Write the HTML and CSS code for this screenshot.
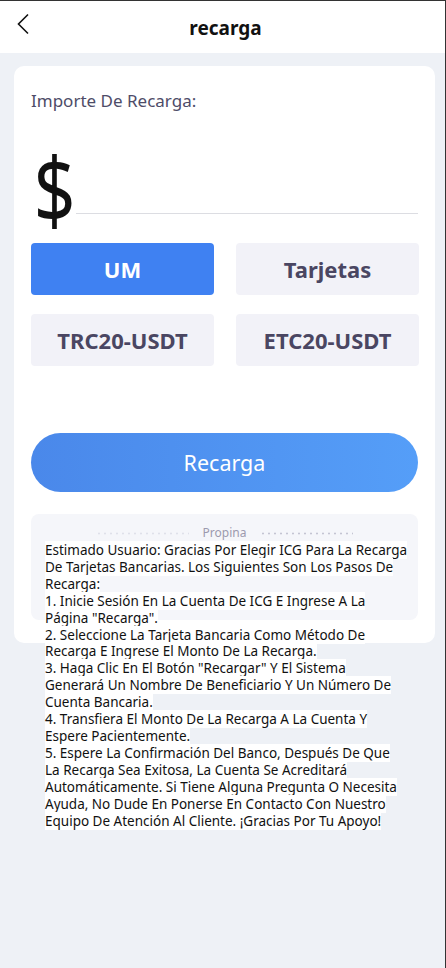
FILE: index.html
```html
<!DOCTYPE html>
<html lang="es">
<head>
<meta charset="utf-8">
<title>recarga</title>
<link rel="stylesheet" href="styles.css">
</head>
<body>
<div class="frame">
  <header class="topbar">
    <svg class="back" width="14" height="22" viewBox="0 0 14 22"><path d="M12 1.5 L2.5 11 L12 20.5" fill="none" stroke="#111" stroke-width="1.6"/></svg>
    <h1 class="title">recarga</h1>
  </header>
  <main class="card">
    <div class="label">Importe De Recarga:</div>
    <div class="amount">
      <span class="dollar">$</span>
      <div class="input"></div>
    </div>
    <div class="methods">
      <div class="method active">UM</div>
      <div class="method">Tarjetas</div>
      <div class="method">TRC20-USDT</div>
      <div class="method">ETC20-USDT</div>
    </div>
    <button class="submit">Recarga</button>
    <section class="tips">
      <div class="tips-head"><span class="dots left"></span><span class="tips-title">Propina</span><span class="dots right"></span></div>
      <div class="tips-body"><span class="hl">Estimado Usuario: Gracias Por Elegir ICG Para La Recarga<br>De Tarjetas Bancarias. Los Siguientes Son Los Pasos De<br>Recarga:<br>1. Inicie Sesión En La Cuenta De ICG E Ingrese A La<br>Página "Recarga".<br>2. Seleccione La Tarjeta Bancaria Como Método De<br>Recarga E Ingrese El Monto De La Recarga.<br>3. Haga Clic En El Botón "Recargar" Y El Sistema<br>Generará Un Nombre De Beneficiario Y Un Número De<br>Cuenta Bancaria.<br>4. Transfiera El Monto De La Recarga A La Cuenta Y<br>Espere Pacientemente.<br>5. Espere La Confirmación Del Banco, Después De Que<br>La Recarga Sea Exitosa, La Cuenta Se Acreditará<br>Automáticamente. Si Tiene Alguna Pregunta O Necesita<br>Ayuda, No Dude En Ponerse En Contacto Con Nuestro<br>Equipo De Atención Al Cliente. ¡Gracias Por Tu Apoyo!</span></div>
    </section>
  </main>
</div>
</body>
</html>
```
FILE: styles.css
```css
* { box-sizing: border-box; }
html, body { margin: 0; padding: 0; }
body {
  background: #eef1f6;
  font-family: "Noto Sans", "Open Sans", sans-serif;
  color: #111;
}
.frame {
  min-height: 968px;
  border-top: 1px solid #333;
  border-right: 1px solid #333;
}
.topbar {
  height: 52px;
  background: #fff;
  display: flex;
  align-items: center;
  justify-content: center;
  position: relative;
}
.back { position: absolute; left: 16px; top: 12px; }
.title {
  margin: 0;
  font-size: 19px;
  font-weight: 700;
  color: #111;
  padding-top: 2px;
  padding-left: 6px;
}
.card {
  margin: 13px 10px 0 14px;
  height: 577px;
  background: #fff;
  border-radius: 10px;
  padding: 25px 17px 0;
}
.label {
  font-size: 17px;
  line-height: 20px;
  color: #4e4c68;
}
.amount {
  display: flex;
  align-items: flex-end;
  height: 80px;
  margin-top: 40px;
}
.dollar {
  display: inline-block;
  font-size: 92px;
  line-height: 80px;
  font-weight: 400;
  color: #111;
  width: 45px;
  transform: scaleX(0.8) translate(3px, -3px);
  transform-origin: left bottom;
}
.input {
  flex: 1;
  border-bottom: 1px solid #dcdde2;
  margin-bottom: 17px;
}
.methods {
  margin-top: 12px;
  display: grid;
  grid-template-columns: 183px 183px;
  column-gap: 22px;
  row-gap: 19px;
}
.method {
  height: 52px;
  border-radius: 4px;
  background: #f2f2f8;
  color: #4a4662;
  font-size: 22px;
  font-weight: 700;
  display: flex;
  align-items: center;
  justify-content: center;
}
.method.active { background: #3f81f2; color: #fff; }
.submit {
  display: block;
  width: 100%;
  height: 59px;
  margin-top: 67px;
  border: none;
  border-radius: 30px;
  background: linear-gradient(90deg, #4a88ea, #559ef8);
  color: #fff;
  font-family: inherit;
  font-size: 21.5px;
  font-weight: 400;
}
.tips {
  margin-top: 22px;
  height: 106px;
  background: #f5f6fa;
  border-radius: 8px;
  padding: 10px 14px 0;
}
.tips-head {
  display: flex;
  align-items: center;
  justify-content: center;
  height: 18px;
}
.tips-title {
  font-size: 12px;
  color: #9c9aae;
  margin: 0 14px;
  line-height: 18px;
}
.dots {
  width: 93px;
  height: 3px;
  background-image: radial-gradient(circle, currentColor 0.9px, transparent 1.2px);
  background-size: 6px 3px;
}
.dots.left { color: #dfe1ea; }
.dots.right { color: #c4c5d3; }
.tips-body {
  font-size: 13.5px;
  line-height: 16.9px;
  color: #111;
  white-space: nowrap;
}
.hl { background: #fff; }
```
